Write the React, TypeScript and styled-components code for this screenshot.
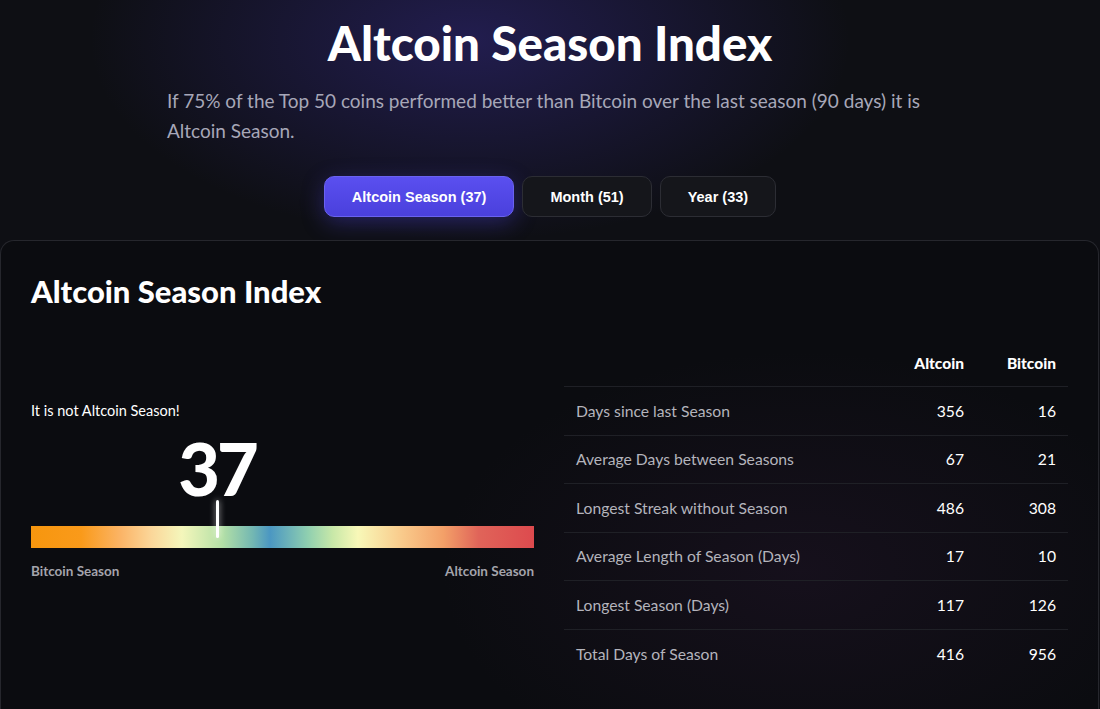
import React from "react";
import styled, { createGlobalStyle } from "styled-components";

const FONT = `Lato, "Open Sans", "Noto Sans", sans-serif`;

const Global = createGlobalStyle`
  html, body { margin: 0; padding: 0; }
  body {
    background: #0e0f14;
    font-family: ${FONT};
    color: #fff;
    overflow: hidden;
  }
  * { box-sizing: border-box; }
`;

const Page = styled.div`
  width: 1100px;
  height: 709px;
  overflow: hidden;
  background:
    radial-gradient(ellipse 380px 200px at 470px 40px, rgba(58, 46, 150, 0.45), rgba(58, 46, 150, 0) 100%),
    #0e0f14;
  display: flex;
  flex-direction: column;
`;

const Hero = styled.header`
  display: flex;
  flex-direction: column;
  align-items: center;
  padding-top: 14px;
`;

const Title = styled.h1`
  margin: 0;
  font-size: 47.5px;
  line-height: 58px;
  font-weight: 900;
  letter-spacing: 0;
  color: #fff;
`;

const Lead = styled.p`
  margin: 14px 0 0;
  width: 766px;
  font-size: 19px;
  line-height: 30px;
  color: #a7a7b8;
  letter-spacing: 0;
`;

const Tabs = styled.div`
  display: flex;
  gap: 8px;
  margin-top: 30px;
`;

const Tab = styled.button<{ $active?: boolean }>`
  height: 41px;
  padding: 0 27px;
  border-radius: 10px;
  font-family: "Liberation Sans", Arial, sans-serif;
  font-weight: 700;
  font-size: 14.5px;
  color: #fff;
  cursor: pointer;
  border: 1px solid ${(p) => (p.$active ? "#6a62f0" : "#2c2d34")};
  background: ${(p) => (p.$active ? "linear-gradient(180deg, #5a4ff0, #4a40dc)" : "#15161b")};
  box-shadow: ${(p) => (p.$active ? "0 6px 22px rgba(80, 70, 230, 0.35)" : "none")};
`;

const Card = styled.section`
  margin-top: 23px;
  margin-right: 1px;
  flex: 1;
  border: 1px solid #26272d;
  border-bottom: none;
  border-radius: 14px 14px 0 0;
  background:
    radial-gradient(ellipse 360px 220px at 800px 330px, rgba(60, 30, 70, 0.22), rgba(60, 30, 70, 0) 100%),
    #0b0c10;
  padding: 30px 30px 0 30px;
`;

const CardTitle = styled.h2`
  margin: 0;
  font-size: 31px;
  line-height: 40px;
  font-weight: 900;
  letter-spacing: 0;
`;

const Body = styled.div`
  display: grid;
  grid-template-columns: 503px 504px;
  column-gap: 30px;
  margin-top: 29px;
`;

const Gauge = styled.div`
  padding-top: 61px;
  display: flex;
  flex-direction: column;
`;

const Status = styled.div`
  font-size: 14.5px;
  line-height: 20px;
  color: #fff;
`;

const Scale = styled.div`
  position: relative;
  margin-top: 9px;
  height: 118px;
`;

const Value = styled.div`
  position: absolute;
  top: -2px;
  transform: translateX(-50%);
  font-size: 72px;
  line-height: 80px;
  font-weight: 900;
  letter-spacing: -3px;
`;

const Bar = styled.div`
  position: absolute;
  left: 0;
  right: 0;
  top: 96px;
  height: 22px;
  background: linear-gradient(
    90deg,
    #f7960e 0%,
    #fa9a1a 10%,
    #fbb568 18%,
    #fbd79a 24%,
    #f4f6bb 30%,
    #b4e0a6 38%,
    #74b8b2 44%,
    #4b97c2 47.5%,
    #8fcfb0 55%,
    #c8e8a8 60%,
    #f8f8b8 65%,
    #f9c98a 74%,
    #f3a068 82%,
    #e06459 89%,
    #dd4a4e 100%
  );
`;

const Marker = styled.div`
  position: absolute;
  top: 70px;
  width: 3px;
  height: 38px;
  margin-left: -1.5px;
  border-radius: 2px;
  background: #fff;
  box-shadow: 0 0 6px rgba(255, 255, 255, 0.7);
`;

const ScaleLabels = styled.div`
  display: flex;
  justify-content: space-between;
  margin-top: 15px;
  font-size: 13.5px;
  font-weight: 700;
  color: #a4a4ac;
`;

const Table = styled.div`
  display: grid;
  grid-template-columns: 1fr 100px 92px;
`;

const HeadCell = styled.div<{ $num?: boolean }>`
  height: 47px;
  display: flex;
  align-items: center;
  justify-content: ${(p) => (p.$num ? "flex-end" : "flex-start")};
  padding: 0 12px 0 12px;
  font-size: 15.5px;
  font-weight: 900;
  color: #fff;
  border-bottom: 1px solid #1f2026;
`;

const Cell = styled.div<{ $num?: boolean; $last?: boolean }>`
  height: 48.5px;
  display: flex;
  align-items: center;
  justify-content: ${(p) => (p.$num ? "flex-end" : "flex-start")};
  padding: 0 12px;
  font-size: 15.7px;
  color: ${(p) => (p.$num ? "#fff" : "#b4b4bc")};
  border-bottom: ${(p) => (p.$last ? "none" : "1px solid #1f2026")};
`;

const rows: [string, number, number][] = [
  ["Days since last Season", 356, 16],
  ["Average Days between Seasons", 67, 21],
  ["Longest Streak without Season", 486, 308],
  ["Average Length of Season (Days)", 17, 10],
  ["Longest Season (Days)", 117, 126],
  ["Total Days of Season", 416, 956],
];

export default function App() {
  const value = 37;
  const pct = `${value}%`;
  return (
    <>
      <Global />
      <Page>
        <Hero>
          <Title>Altcoin Season Index</Title>
          <Lead>
            If 75% of the Top 50 coins performed better than Bitcoin over the last season (90 days) it is
            Altcoin Season.
          </Lead>
          <Tabs>
            <Tab $active>Altcoin Season (37)</Tab>
            <Tab>Month (51)</Tab>
            <Tab>Year (33)</Tab>
          </Tabs>
        </Hero>
        <Card>
          <CardTitle>Altcoin Season Index</CardTitle>
          <Body>
            <Gauge>
              <Status>It is not Altcoin Season!</Status>
              <Scale>
                <Bar />
                <Value style={{ left: pct }}>{value}</Value>
                <Marker style={{ left: pct }} />
              </Scale>
              <ScaleLabels>
                <span>Bitcoin Season</span>
                <span>Altcoin Season</span>
              </ScaleLabels>
            </Gauge>
            <Table>
              <HeadCell />
              <HeadCell $num>Altcoin</HeadCell>
              <HeadCell $num>Bitcoin</HeadCell>
              {rows.map(([label, a, b], i) => {
                const last = i === rows.length - 1;
                return (
                  <React.Fragment key={label}>
                    <Cell $last={last}>{label}</Cell>
                    <Cell $num $last={last}>{a}</Cell>
                    <Cell $num $last={last}>{b}</Cell>
                  </React.Fragment>
                );
              })}
            </Table>
          </Body>
        </Card>
      </Page>
    </>
  );
}
